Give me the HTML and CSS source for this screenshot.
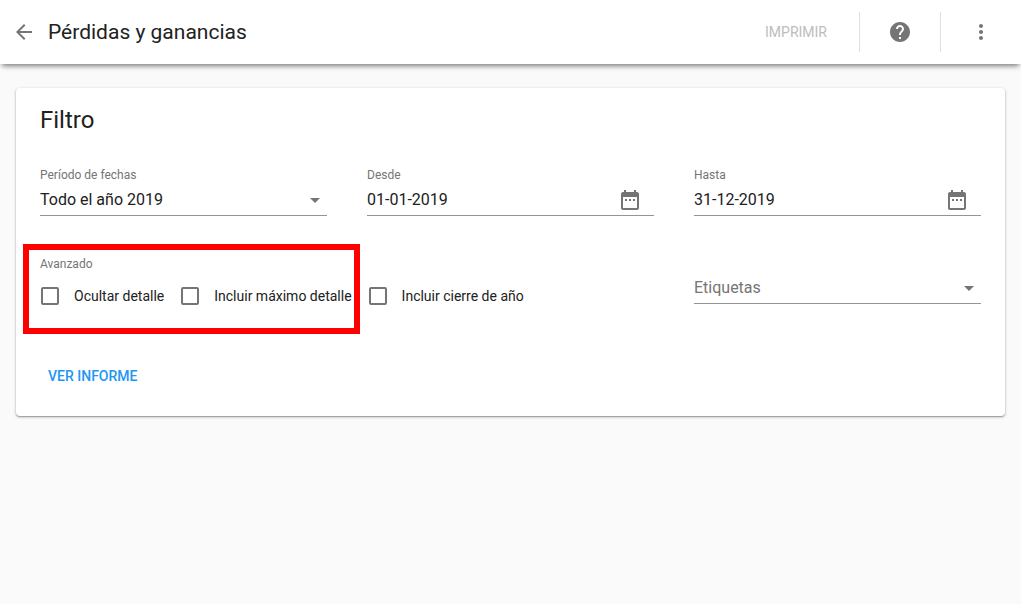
FILE: index.html
```
<!DOCTYPE html>
<html lang="es">
  <head>
    <meta charset="UTF-8" />
    <meta name="viewport" content="width=device-width, initial-scale=1.0" />
    <title>Pérdidas y ganancias</title>
    <link rel="stylesheet" href="styles.css">
  </head>
  <body>
    <header class="toolbar">
      <button type="button" class="icon-button back" aria-label="Volver">
        <svg class="icon" viewBox="0 0 24 24"><path d="M20 11H7.83l5.59-5.59L12 4l-8 8 8 8 1.41-1.41L7.83 13H20v-2z"/></svg>
      </button>
      <h1 class="title">Pérdidas y ganancias</h1>
      <button type="button" class="print" disabled>IMPRIMIR</button>
      <div class="tool">
        <button type="button" class="icon-button" aria-label="Ayuda">
          <svg class="icon" viewBox="0 0 24 24"><path d="M12 2C6.48 2 2 6.48 2 12s4.48 10 10 10 10-4.48 10-10S17.52 2 12 2zm1 17h-2v-2h2v2zm2.07-7.75l-.9.92C13.45 12.9 13 13.5 13 15h-2v-.5c0-1.1.45-2.1 1.17-2.83l1.24-1.26c.37-.36.59-.86.59-1.41 0-1.1-.9-2-2-2s-2 .9-2 2H8c0-2.21 1.79-4 4-4s4 1.79 4 4c0 .88-.36 1.68-.93 2.25z"/></svg>
        </button>
      </div>
      <div class="tool">
        <button type="button" class="icon-button" aria-label="Más opciones">
          <svg class="icon" viewBox="0 0 24 24"><path d="M12 8c1.1 0 2-.9 2-2s-.9-2-2-2-2 .9-2 2 .9 2 2 2zm0 2c-1.1 0-2 .9-2 2s.9 2 2 2 2-.9 2-2-.9-2-2-2zm0 6c-1.1 0-2 .9-2 2s.9 2 2 2 2-.9 2-2-.9-2-2-2z"/></svg>
        </button>
      </div>
    </header>

    <main class="content">
      <form class="card">
        <h2 class="card-title">Filtro</h2>

        <div class="filters">
          <div class="field">
            <label for="periodo">Período de fechas</label>
            <div class="control">
              <select id="periodo">
                <option>Todo el año 2019</option>
              </select>
              <svg class="icon arrow" viewBox="0 0 24 24"><path d="M7 10l5 5 5-5z"/></svg>
            </div>
          </div>

          <div class="field">
            <label for="desde">Desde</label>
            <div class="control">
              <input type="text" id="desde" value="01-01-2019" />
              <button type="button" class="icon-button calendar" aria-label="Elegir fecha desde">
                <svg class="icon" viewBox="0 0 24 24"><path d="M9 11H7v2h2v-2zm4 0h-2v2h2v-2zm4 0h-2v2h2v-2zm2-7h-1V2h-2v2H8V2H6v2H5c-1.11 0-1.99.9-1.99 2L3 20c0 1.1.89 2 2 2h14c1.1 0 2-.9 2-2V6c0-1.1-.9-2-2-2zm0 16H5V9h14v11z"/></svg>
              </button>
            </div>
          </div>

          <div class="field">
            <label for="hasta">Hasta</label>
            <div class="control">
              <input type="text" id="hasta" value="31-12-2019" />
              <button type="button" class="icon-button calendar" aria-label="Elegir fecha hasta">
                <svg class="icon" viewBox="0 0 24 24"><path d="M9 11H7v2h2v-2zm4 0h-2v2h2v-2zm4 0h-2v2h2v-2zm2-7h-1V2h-2v2H8V2H6v2H5c-1.11 0-1.99.9-1.99 2L3 20c0 1.1.89 2 2 2h14c1.1 0 2-.9 2-2V6c0-1.1-.9-2-2-2zm0 16H5V9h14v11z"/></svg>
              </button>
            </div>
          </div>

          <div class="advanced" role="group" aria-labelledby="avanzado">
            <span class="advanced-label" id="avanzado">Avanzado</span>
            <div class="checks">
              <div class="checks-marked">
                <label class="check"><input type="checkbox" />Ocultar detalle</label>
                <label class="check"><input type="checkbox" />Incluir máximo detalle</label>
              </div>
              <label class="check"><input type="checkbox" />Incluir cierre de año</label>
            </div>
          </div>

          <div class="field tags">
            <div class="control">
              <select id="etiquetas" aria-label="Etiquetas">
                <option>Etiquetas</option>
              </select>
              <svg class="icon arrow" viewBox="0 0 24 24"><path d="M7 10l5 5 5-5z"/></svg>
            </div>
          </div>
        </div>

        <button type="button" class="submit">VER INFORME</button>
      </form>
    </main>
  </body>
</html>
```
FILE: styles.css
```
* {
  box-sizing: border-box;
}
body {
  margin: 0;
  background-color: #fafafa;
  color: #212121;
  font-family: Roboto, "Liberation Sans", sans-serif;
  font-size: 16px;
}
button,
input,
select {
  font-family: inherit;
  color: inherit;
}
button {
  padding: 0;
  border: none;
  background: none;
  cursor: pointer;
}
.icon {
  display: block;
  width: 24px;
  height: 24px;
  fill: #757575;
}
.toolbar {
  display: flex;
  align-items: center;
  height: 64px;
  background-color: #fff;
  box-shadow: 0 4px 5px -2px rgba(0, 0, 0, 0.5);
}
.back {
  margin: 0 12px;
}
.title {
  flex: 1;
  margin: 0;
  font-size: 21px;
  font-weight: 400;
}
.print {
  margin-right: 32px;
  font-size: 14px;
  color: #bdbdbd;
}
.tool {
  display: flex;
  align-items: center;
  justify-content: center;
  width: 81px;
  height: 40px;
  border-left: 1px solid #e0e0e0;
}
.content {
  padding: 24px 16px;
}
.card {
  padding: 16px 24px 24px;
  background-color: #fff;
  border-radius: 4px;
  box-shadow: 0 1px 3px rgba(0, 0, 0, 0.3), 0 1px 1px rgba(0, 0, 0, 0.2);
}
.card-title {
  margin: 0 0 31px;
  font-size: 24px;
  line-height: 32px;
  font-weight: 400;
}
.filters {
  display: grid;
  grid-template-columns: repeat(3, 1fr);
  gap: 40px;
}
.field label,
.advanced-label {
  display: block;
  font-size: 12px;
  line-height: 16px;
  color: #757575;
}
.field label {
  margin-bottom: 1px;
}
.control {
  display: grid;
  align-items: center;
  height: 32px;
  border-bottom: 1px solid #949494;
}
.control > * {
  grid-area: 1 / 1;
}
.control select,
.control input {
  appearance: none;
  width: 100%;
  height: 31px;
  padding: 0;
  border: none;
  outline: none;
  background: none;
  font-size: 16px;
}
.arrow {
  justify-self: end;
  pointer-events: none;
}
.calendar {
  justify-self: end;
  margin-right: 12px;
}
.advanced {
  grid-column: span 2;
}
.checks {
  display: flex;
  gap: 16px;
  margin-top: 14px;
}
.checks-marked {
  position: relative;
  display: flex;
  gap: 16px;
}
/* red frame around the first two options */
.checks-marked::after {
  content: "";
  position: absolute;
  inset: -42px -8px -28px -17px;
  border: 6px solid #f00;
  pointer-events: none;
}
.check {
  display: flex;
  align-items: center;
  font-size: 14px;
  line-height: 20px;
  white-space: nowrap;
}
.check input {
  appearance: none;
  width: 18px;
  height: 18px;
  margin: 0 15px 0 1px;
  border: 2px solid #757575;
  border-radius: 2px;
}
.tags {
  padding-top: 16px;
}
.tags select {
  color: #757575;
}
.submit {
  height: 32px;
  margin-top: 54px;
  padding: 0 8px;
  font-size: 14px;
  font-weight: 500;
  color: #2196f3;
}
```
